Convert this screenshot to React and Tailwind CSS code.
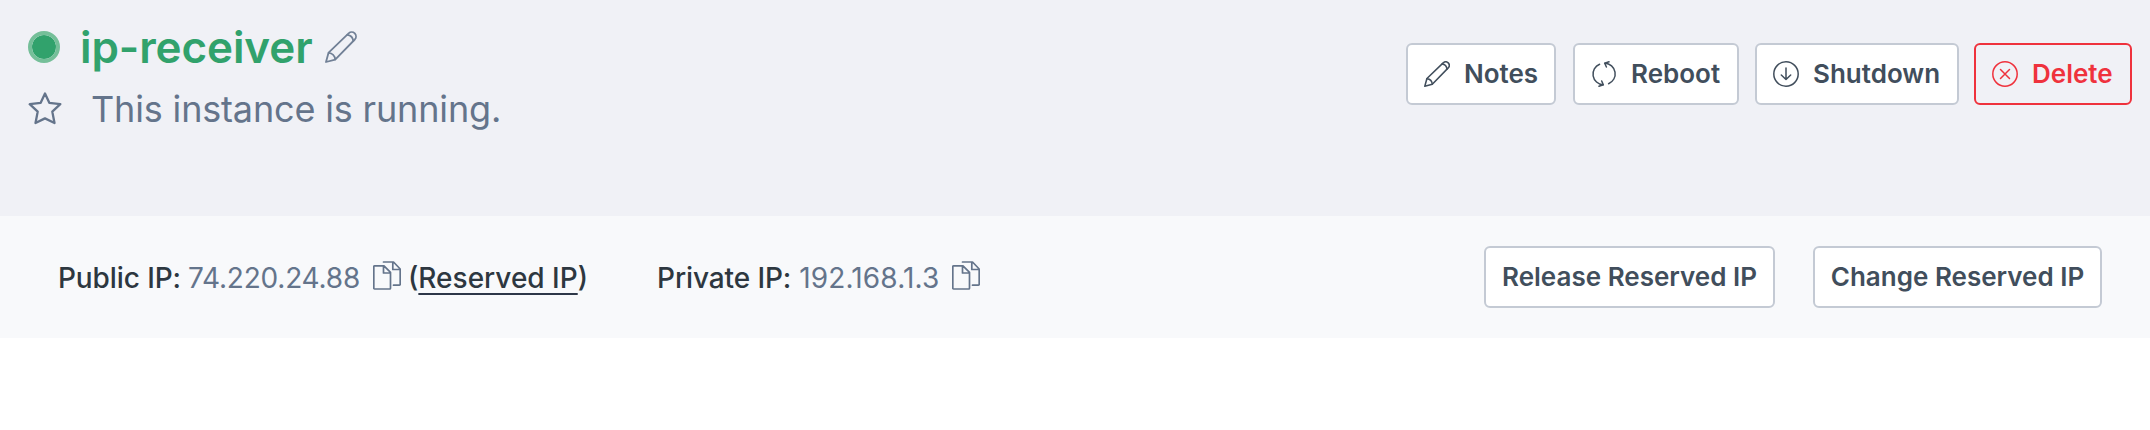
const btn =
  "flex h-[62px] items-center rounded-md border-2 text-[26px] leading-none font-semibold whitespace-nowrap";

function Pencil({ className, strokeWidth = 1.5 }) {
  return (
    <svg viewBox="0 0 32 32" fill="none" stroke="currentColor" strokeWidth={strokeWidth} strokeLinejoin="round" strokeLinecap="round" className={className}>
      <path d="M1 31 3.600 21.600 23.600 2.300a4.600 4.600 0 0 1 6.200 0 4.600 4.600 0 0 1 0 6.200L10.200 28.600z" />
      <path d="M3.700 21.800c3.400.4 6.200 3 6.500 6.600M22.300 3.800c3.200.4 5.600 2.800 6 6.200" />
    </svg>
  );
}

function Star({ className }) {
  return (
    <svg viewBox="0 0 34 33" fill="none" stroke="currentColor" strokeWidth="2.3" strokeLinejoin="round" className={className}>
      <path d="M17 1.500 21.300 10.800 32.300 12.200 24.300 19.600 26.500 31 17 26.400 7.500 31 9.700 19.600 1.700 12.200 12.700 10.800z" />
    </svg>
  );
}

function Reboot({ className }) {
  return (
    <svg viewBox="0 0 26 26" fill="none" stroke="currentColor" strokeWidth="1.5" strokeLinecap="round" strokeLinejoin="round" className={className}>
      <path d="M8.600 3.300A10.600 10.600 0 0 0 12 23.700M14 2.300A10.600 10.600 0 0 1 17.600 22.700" />
      <path d="M18 .8 13.700 2.200 15.400 6M8 25.200 12.300 23.800 10.700 20" />
    </svg>
  );
}

function CircleIcon({ d, className }) {
  return (
    <svg viewBox="0 0 26 26" fill="none" stroke="currentColor" strokeWidth="1.5" strokeLinecap="round" strokeLinejoin="round" className={className}>
      <circle cx="13" cy="13" r="12.200" />
      <path d={d} />
    </svg>
  );
}

function Copy({ className }) {
  return (
    <svg viewBox="0 0 28 29" fill="none" stroke="currentColor" strokeWidth="1.7" strokeLinecap="round" strokeLinejoin="round" className={className}>
      <path d="M1.500 4.800H11L17.500 11.300V27.200a.8.8 0 0 1-.8.8H1.600a.8.8 0 0 1-.8-.8V5.600a.8.8 0 0 1 .8-.8zM10.500 4.800V12H17.500" />
      <path d="M10.500 1H20.500L27.200 8V23.400a.8.8 0 0 1-.8.8H20.500M19.800 1V8.500H27.200" />
    </svg>
  );
}

export default function App() {
  return (
    <div className="h-[430px] w-[2150px] overflow-hidden bg-white font-[Inter,sans-serif]">
      <header className="flex h-[216px] justify-between bg-[#f0f1f6] pr-[18px] pl-7">
        <div className="pt-5">
          <div className="flex h-[54px] items-center">
            <span className="size-8 rounded-full border-4 border-[#75bf99] bg-[#31a26c] bg-clip-padding" />
            <h1 className="ml-5 text-[44px] leading-[54px] font-semibold tracking-[-0.1px] text-[#31a26c]">ip-receiver</h1>
            <Pencil strokeWidth={1.8} className="ml-3 size-8 text-[#718096]" />
          </div>
          <div className="mt-2 flex h-[54px] items-center">
            <Star className="mb-0.5 h-[33px] w-[34px] text-[#64748b]" />
            <p className="ml-[29px] text-[36px] leading-[54px] tracking-[-0.16px] text-[#64748b]">This instance is running.</p>
          </div>
        </div>
        <div className="flex pt-[43px] text-[#414e5c]">
          <button className={`${btn} w-[150px] border-[#c4cad4] bg-white pl-4`}>
            <Pencil strokeWidth={1.9} className="size-[26px]" />
            <span className="ml-3.5">Notes</span>
          </button>
          <button className={`${btn} ml-[17px] w-[166px] border-[#c4cad4] bg-white pl-4`}>
            <Reboot className="size-[26px]" />
            <span className="ml-3.5">Reboot</span>
          </button>
          <button className={`${btn} ml-4 w-[204px] border-[#c4cad4] bg-white pl-4`}>
            <CircleIcon d="M13 7V18.500M8.300 14 13 18.500 17.700 14" className="size-[26px]" />
            <span className="ml-3.5">Shutdown</span>
          </button>
          <button className={`${btn} ml-[15px] w-[158px] border-[#ef323d] pl-4 text-[#ef323d]`}>
            <CircleIcon d="M8.500 8.500 17.500 17.500M17.500 8.500 8.500 17.500" className="size-[26px]" />
            <span className="ml-3.5">Delete</span>
          </button>
        </div>
      </header>
      <section className="flex h-[122px] items-center justify-between bg-[#f8f9fb] pr-12 pl-[58px] text-[28px] leading-[42px]">
        <div className="flex items-center pt-0.5">
          <span className="font-medium tracking-[-0.1px] text-[#2d3740]">Public IP:</span>
          <span className="ml-[7px] tracking-[-0.2px] text-[#64748b]">74.220.24.88</span>
          <Copy className="mb-1.5 ml-[13px] h-[29px] w-7 text-[#64748b]" />
          <span className="ml-[7px] font-medium text-[#2d3740]">
            (<a className="underline decoration-[#2d3748] decoration-2 underline-offset-[5px]">Reserved IP</a>)
          </span>
          <span className="ml-[69px] font-medium tracking-[-0.1px] text-[#2d3740]">Private IP:</span>
          <span className="ml-2 tracking-[0.15px] text-[#64748b]">192.168.1.3</span>
          <Copy className="mb-1.5 ml-[13px] h-[29px] w-7 text-[#64748b]" />
        </div>
        <div className="flex text-[#414e5c]">
          <button className={`${btn} w-[291px] justify-center border-[#c4cad4] bg-white`}>Release Reserved IP</button>
          <button className={`${btn} ml-[38px] w-[289px] justify-center border-[#c4cad4] bg-white`}>Change Reserved IP</button>
        </div>
      </section>
    </div>
  );
}
